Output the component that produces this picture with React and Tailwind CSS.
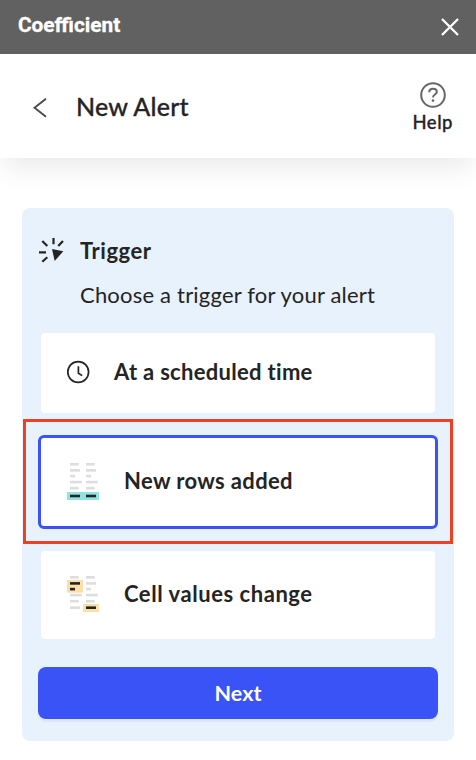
import React, { useState } from 'react'

const CloseIcon = () => (
  <svg width="18" height="18" viewBox="0 0 18 18" fill="none" stroke="white" strokeWidth="2.3">
    <path d="M1 1L17 17M17 1L1 17" />
  </svg>
)

const BackIcon = () => (
  <svg width="14" height="20" viewBox="0 0 14 20" fill="none" stroke="#4a4a4a" strokeWidth="1.9">
    <path d="M13 0.7L1.5 9.7L13 18.7" />
  </svg>
)

const HelpIcon = () => (
  <svg width="26" height="26" viewBox="0 0 26 26" fill="none" stroke="#666666" strokeWidth="2">
    <circle cx="13" cy="13" r="11.8" />
    <path d="M9.2 10.2C9.2 7.8 10.8 6.7 13 6.7C15.2 6.7 16.8 8 16.8 9.9C16.8 12.6 13 12.5 13 15.4" />
    <circle cx="13" cy="18.6" r="1.3" fill="#666666" stroke="none" />
  </svg>
)

const TriggerIcon = () => (
  <svg width="26" height="26" viewBox="0 0 26 26" fill="none" stroke="#242424" strokeWidth="2.2">
    <path d="M15.5 0V6.2M4.3 3L9.3 8M25 3L20.2 8M1 14.3H8M4.3 23.8L9.3 19.3" />
    <path d="M14 11L25.3 13.2L16.7 23Z" fill="#242424" stroke="none" />
  </svg>
)

const ClockIcon = () => (
  <svg width="24" height="24" viewBox="0 0 24 24" fill="none" stroke="#242424" strokeWidth="1.7">
    <circle cx="12.2" cy="12" r="10.4" />
    <path d="M12.4 6.3V13.2L16.2 15.6" />
  </svg>
)

const ROWS = [
  { y: 1, w: 8.7 },
  { y: 7.1, w: 10 },
  { y: 12.8, w: 5 },
  { y: 18.8, w: 11.7 },
  { y: 24.9, w: 8.7 },
]

const SheetRows = ({ lastY, dark = [] }) => (
  <>
    {[...ROWS, { y: lastY, w: 10 }].map((row, i) =>
      [3, 19].map((x, col) => (
        <rect
          key={`${i}-${col}`}
          x={x}
          y={row.y}
          width={row.w}
          height="2.6"
          fill={dark.includes(`${i}-${col}`) ? '#242424' : '#dddddd'}
        />
      ))
    )}
  </>
)

const NewRowsIcon = () => (
  <svg width="32" height="40" viewBox="0 0 32 40">
    <rect y="30" width="32" height="8" fill="#93e2e3" />
    <SheetRows lastY={32.7} dark={['5-0', '5-1']} />
  </svg>
)

const CellChangeIcon = () => (
  <svg width="32" height="40" viewBox="0 0 32 40">
    <rect y="5" width="16" height="12.7" fill="#fbdfa8" />
    <rect x="16" y="29" width="16" height="8" fill="#fbdfa8" />
    <SheetRows lastY={31.4} dark={['1-0', '2-0', '5-1']} />
  </svg>
)

const App = () => {
  const [selected, setSelected] = useState('rows')

  return (
    <div className="w-[476px] h-[760px] overflow-hidden bg-white text-[#242424] font-['Lato',sans-serif]">
      <header className="relative z-10 h-[54px] bg-[#616161] flex items-start justify-between pl-[18px] pr-[17px]">
        <span className="mt-[9px] text-[20.8px] leading-8 font-bold text-white font-['Roboto',sans-serif] [-webkit-text-stroke:0.3px_white]">
          Coefficient
        </span>
        <button className="mt-[18px]">
          <CloseIcon />
        </button>
      </header>

      <div className="h-[104px] flex items-center pl-[33px] pr-[23px] shadow-[0_16px_24px_-4px_rgba(0,0,0,0.075)]">
        <button className="mt-[3px]">
          <BackIcon />
        </button>
        <h1 className="ml-[29px] text-[25px] leading-8 font-medium tracking-[0.2px] [-webkit-text-stroke:0.3px_#242424]">
          New Alert
        </h1>
        <button className="ml-auto mt-1 flex flex-col items-center">
          <HelpIcon />
          <span className="mt-0.5 text-[18.5px] leading-6 font-medium tracking-[0.5px] [-webkit-text-stroke:0.3px_#242424]">
            Help
          </span>
        </button>
      </div>

      <main className="relative mt-[50px] mx-[22px] h-[533px] rounded-lg bg-[#e7f2fd] px-4 pt-[29px]">
        <div className="flex items-center h-7">
          <TriggerIcon />
          <h2 className="ml-4 text-[22px] leading-7 font-bold tracking-[0.55px]">Trigger</h2>
        </div>
        <p className="ml-[42px] mt-4 text-[22px] leading-7 tracking-[0.2px]">Choose a trigger for your alert</p>

        <div className="mt-6 flex flex-col">
          <button
            onClick={() => setSelected('time')}
            className="mx-[3px] h-20 flex items-center rounded bg-white pl-[25px] pb-0.5"
          >
            <ClockIcon />
            <span className="ml-6 text-[22px] leading-7 font-bold tracking-[0.3px]">At a scheduled time</span>
          </button>
          <button
            onClick={() => setSelected('rows')}
            className="mt-[22px] h-[94px] flex items-center rounded-md border-3 border-[#3953f6] bg-white pl-[26px]"
          >
            <NewRowsIcon />
            <span className="ml-[25px] pb-0.5 text-[22px] leading-7 font-bold tracking-[0.35px]">New rows added</span>
          </button>
          <button
            onClick={() => setSelected('cells')}
            className="mx-[3px] mt-[22px] h-[88px] flex items-center rounded bg-white pl-[26px]"
          >
            <CellChangeIcon />
            <span className="ml-[25px] pb-0.5 text-[22px] leading-7 font-bold tracking-[0.55px]">Cell values change</span>
          </button>
        </div>

        <button className="mt-7 w-full h-[52px] rounded-lg bg-[#3953f6] text-white text-[21.5px] leading-7 font-bold shadow-[0_3px_0_rgba(0,0,0,0.045)]">
          Next
        </button>

        {selected === 'rows' && (
          <div className="absolute left-px top-[211px] w-[430px] h-[125px] border-3 border-[#ec4125] pointer-events-none" />
        )}
      </main>
    </div>
  )
}

export default App
